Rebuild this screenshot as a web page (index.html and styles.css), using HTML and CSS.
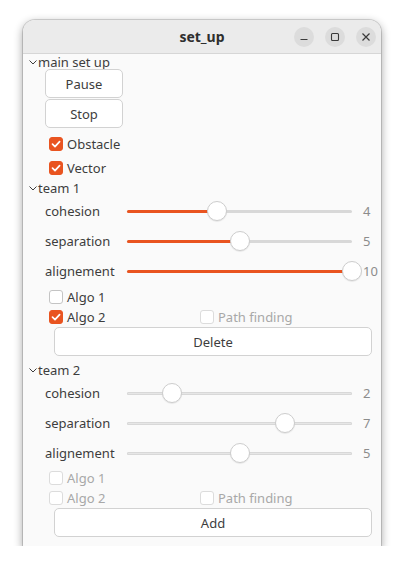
FILE: index.html
```html
<!DOCTYPE html>
<html>
<head>
<meta charset="utf-8">
<title>set_up</title>
<link rel="stylesheet" href="styles.css">
</head>
<body>
<div class="window">
  <header class="titlebar">
    <span class="title">set_up</span>
    <div class="controls">
      <span class="tbtn"><svg width="10" height="10" viewBox="0 0 10 10"><path d="M1.5 7.5h7" stroke="#3a3a3a" stroke-width="1.2" fill="none"/></svg></span>
      <span class="tbtn"><svg width="10" height="10" viewBox="0 0 10 10"><rect x="1.5" y="1.5" width="7" height="7" rx="1" stroke="#3a3a3a" stroke-width="1.1" fill="none"/></svg></span>
      <span class="tbtn"><svg width="10" height="10" viewBox="0 0 10 10"><path d="M1.5 1.5l7 7M8.5 1.5l-7 7" stroke="#3a3a3a" stroke-width="1.2" fill="none"/></svg></span>
    </div>
  </header>
  <main class="content">
    <div class="expander first"><svg class="chev" width="8" height="5" viewBox="0 0 8 5"><path d="M0.5 0.5L4 4L7.5 0.5" stroke="#3d3d3d" stroke-width="1" fill="none"/></svg><span>main set up</span></div>
    <div class="main-body">
      <button class="btn small">Pause</button>
      <button class="btn small">Stop</button>
      <div class="checks main-checks">
        <label class="check tall"><span class="box on"><svg width="14" height="14" viewBox="0 0 14 14"><path d="M3.5 7.2L6 9.6L10.6 4.6" stroke="#fff" stroke-width="1.7" fill="none" stroke-linecap="round" stroke-linejoin="round"/></svg></span><span class="lbl">Obstacle</span></label>
        <label class="check tall"><span class="box on"><svg width="14" height="14" viewBox="0 0 14 14"><path d="M3.5 7.2L6 9.6L10.6 4.6" stroke="#fff" stroke-width="1.7" fill="none" stroke-linecap="round" stroke-linejoin="round"/></svg></span><span class="lbl">Vector</span></label>
      </div>
    </div>

    <div class="expander"><svg class="chev" width="8" height="5" viewBox="0 0 8 5"><path d="M0.5 0.5L4 4L7.5 0.5" stroke="#3d3d3d" stroke-width="1" fill="none"/></svg><span>team 1</span></div>
    <div class="team">
      <div class="sliders">
        <span class="slabel">cohesion</span>
        <div class="slider"><div class="trough"><div class="fill" style="width:40%"></div></div><span class="knob" style="left:40%"></span></div>
        <span class="val">4</span>
        <span class="slabel">separation</span>
        <div class="slider"><div class="trough"><div class="fill" style="width:50%"></div></div><span class="knob" style="left:50%"></span></div>
        <span class="val">5</span>
        <span class="slabel">alignement</span>
        <div class="slider"><div class="trough"><div class="fill" style="width:100%"></div></div><span class="knob" style="left:100%"></span></div>
        <span class="val">10</span>
      </div>
      <div class="algos first-algos">
        <label class="check"><span class="box"></span><span class="lbl">Algo 1</span></label>
        <div class="algo-row">
          <label class="check"><span class="box on"><svg width="14" height="14" viewBox="0 0 14 14"><path d="M3.5 7.2L6 9.6L10.6 4.6" stroke="#fff" stroke-width="1.7" fill="none" stroke-linecap="round" stroke-linejoin="round"/></svg></span><span class="lbl">Algo 2</span></label>
          <label class="check path disabled"><span class="box"></span><span class="lbl">Path finding</span></label>
        </div>
      </div>
      <button class="btn wide">Delete</button>
    </div>

    <div class="expander second"><svg class="chev" width="8" height="5" viewBox="0 0 8 5"><path d="M0.5 0.5L4 4L7.5 0.5" stroke="#3d3d3d" stroke-width="1" fill="none"/></svg><span>team 2</span></div>
    <div class="team">
      <div class="sliders off">
        <span class="slabel">cohesion</span>
        <div class="slider"><div class="trough"></div><span class="knob" style="left:20%"></span></div>
        <span class="val">2</span>
        <span class="slabel">separation</span>
        <div class="slider"><div class="trough"></div><span class="knob" style="left:70%"></span></div>
        <span class="val">7</span>
        <span class="slabel">alignement</span>
        <div class="slider"><div class="trough"></div><span class="knob" style="left:50%"></span></div>
        <span class="val">5</span>
      </div>
      <div class="algos">
        <label class="check disabled"><span class="box"></span><span class="lbl">Algo 1</span></label>
        <div class="algo-row">
          <label class="check disabled"><span class="box"></span><span class="lbl">Algo 2</span></label>
          <label class="check path disabled"><span class="box"></span><span class="lbl">Path finding</span></label>
        </div>
      </div>
      <button class="btn wide">Add</button>
    </div>
  </main>
</div>
</body>
</html>
```

FILE: styles.css
```css
* { box-sizing: border-box; }
html, body { margin: 0; }
body {
  background: #ffffff;
  padding: 20px 0 0 23px;
  font-family: "Noto Sans", "DejaVu Sans", sans-serif;
  font-size: 13px;
  color: #3d3d3d;
}
.window {
  width: 358px;
  height: 526px;
  background: #fafafa;
  border-radius: 12px 12px 0 0;
  box-shadow: 0 0 0 1px rgba(0,0,0,0.14), 0 3px 9px 1px rgba(0,0,0,0.32);
  overflow: hidden;
}
.titlebar {
  height: 34px;
  background: #ebebeb;
  border-bottom: 1px solid #d6d6d6;
  display: grid;
  grid-template-columns: 1fr auto 1fr;
  align-items: center;
}
.title {
  grid-column: 2;
  font-weight: bold;
  font-size: 14px;
  color: #2e2e2e;
}
.controls {
  grid-column: 3;
  justify-self: end;
  display: flex;
  gap: 11px;
  padding-right: 5px;
}
.tbtn {
  width: 20px;
  height: 20px;
  border-radius: 50%;
  background: #dcdcdc;
  display: flex;
  align-items: center;
  justify-content: center;
}
.content {
  display: flex;
  flex-direction: column;
}
.expander {
  height: 16px;
  display: flex;
  align-items: center;
  padding-left: 6px;
  gap: 1px;
  line-height: 16px;
}
.expander.first { height: 15px; }
.expander.second { margin-top: 6px; }
.chev { flex: none; margin-top: 1px; }
.main-body {
  display: flex;
  flex-direction: column;
  align-items: flex-start;
  padding-left: 22px;
}
.btn {
  font: inherit;
  color: #3d3d3d;
  background: #ffffff;
  border: 1px solid #d2d2d2;
  border-radius: 5px;
  height: 29px;
  padding: 0;
}
.btn.small { width: 78px; }
.btn.small + .btn.small { margin-top: 1px; }
.main-checks {
  margin-top: 4px;
  padding-left: 4px;
}
.checks { display: flex; flex-direction: column; }
.check {
  display: flex;
  align-items: center;
  gap: 4px;
  height: 20px;
}
.check.tall { height: 24px; }
.box {
  width: 14px;
  height: 14px;
  border-radius: 3px;
  border: 1px solid #c4c4c4;
  background: #ffffff;
  flex: none;
  display: flex;
}
.box.on {
  background: #e95420;
  border-color: #e95420;
}
.box.on svg { margin: -1px; }
.check.disabled .lbl { color: #a8a8a8; }
.check.disabled .box { border-color: #dcdcdc; }
.team {
  display: flex;
  flex-direction: column;
}
.sliders {
  display: grid;
  grid-template-columns: 82px 225px auto;
  grid-auto-rows: 30px;
  align-items: center;
  padding-left: 22px;
}
.sliders .val { color: #8c8c8c; margin-left: 11px; }
.slider {
  position: relative;
  height: 20px;
  display: flex;
  align-items: center;
}
.trough {
  width: 100%;
  height: 3px;
  border-radius: 2px;
  background: #d8d8d8;
}
.fill {
  height: 100%;
  border-radius: 2px;
  background: #e95420;
}
.knob {
  position: absolute;
  top: 0;
  width: 20px;
  height: 20px;
  margin-left: -10px;
  border-radius: 50%;
  background: #ffffff;
  border: 1px solid #cdcdcd;
  box-shadow: 0 1px 1px rgba(0,0,0,0.08);
}
.sliders.off .trough {
  background: #e6e6e6;
  box-shadow: inset 0 0 0 1px #d8d8d8;
}
.algos {
  display: flex;
  flex-direction: column;
  padding-left: 26px;
}
.first-algos { margin-top: 1px; }
.algo-row {
  display: flex;
}
.algo-row .check:first-child { width: 151px; }
.btn.wide {
  width: 318px;
  margin-left: 31px;
}
```
